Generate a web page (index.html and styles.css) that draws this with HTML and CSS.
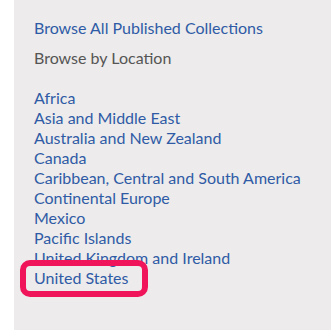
FILE: index.html
```html
<!DOCTYPE html>
<html>
<head>
    <title>Browse Collections</title>
    <meta name="viewport" content="width=device-width, initial-scale=1">
    <link rel="stylesheet" href="styles.css">
</head>
<body>
    <div class="sidebar">
        <a class="link" href="#">Browse All Published Collections</a>
        <div class="heading">Browse by Location</div>
        <ul class="locations">
            <li><a class="link" href="#">Africa</a></li>
            <li><a class="link" href="#">Asia and Middle East</a></li>
            <li><a class="link" href="#">Australia and New Zealand</a></li>
            <li><a class="link" href="#">Canada</a></li>
            <li><a class="link" href="#">Caribbean, Central and South America</a></li>
            <li><a class="link" href="#">Continental Europe</a></li>
            <li><a class="link" href="#">Mexico</a></li>
            <li><a class="link" href="#">Pacific Islands</a></li>
            <li><a class="link" href="#">United Kingdom and Ireland</a></li>
            <li class="highlighted"><a class="link" href="#">United States</a></li>
        </ul>
    </div>
</body>
</html>
```
FILE: styles.css
```css
body {
    margin: 0;
    background: #ffffff;
    font-family: Lato, "Open Sans", Arial, sans-serif;
    font-size: 16px;
    line-height: 20px;
}
.sidebar {
    margin-left: 14px;
    padding: 18px 20px 40px 20px;
    background: #edebeb;
    min-height: 330px;
    box-sizing: border-box;
}
.link {
    color: #2f5ba6;
    text-decoration: none;
}
.heading {
    color: #555555;
    margin-top: 10px;
}
.locations {
    list-style: none;
    margin: 20px 0 0 0;
    padding: 0;
}
.highlighted {
    position: relative;
}
.highlighted::after {
    content: "";
    position: absolute;
    left: -14px;
    top: -8px;
    width: 116px;
    height: 25px;
    border: 6px solid #f0145a;
    border-radius: 10px;
}
```
